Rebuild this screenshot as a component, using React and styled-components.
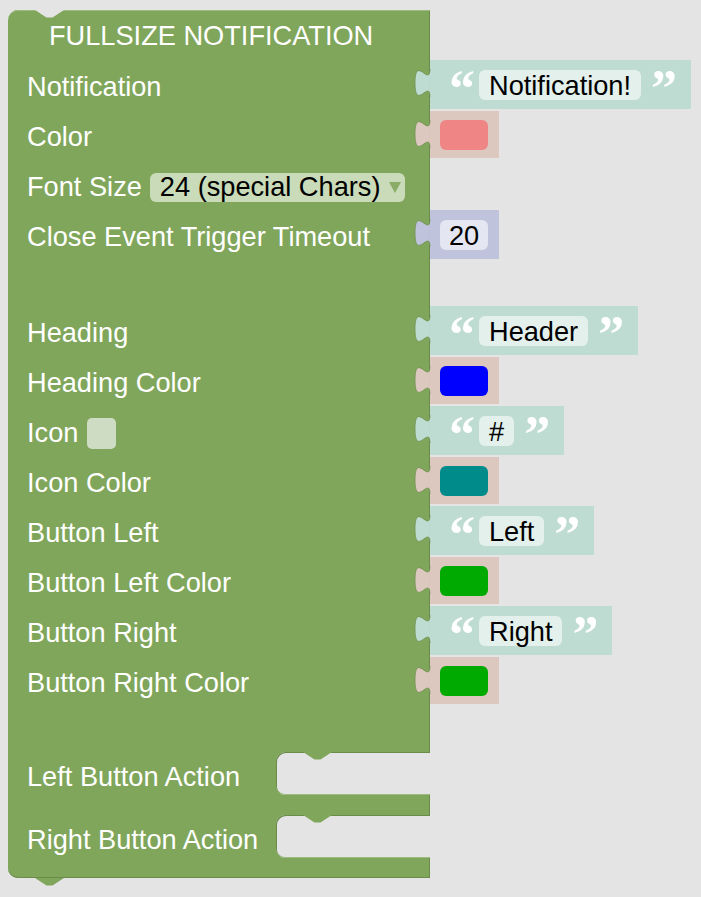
import React from "react";
import styled, { createGlobalStyle } from "styled-components";

const GREEN = "#80a65b";
const DARK = "#6a8b4a";
const LIGHT = "#9dbb80";
const PAGE = "#e4e4e4";
const FONT = "27.2px";

const GlobalStyle = createGlobalStyle`
  html, body {
    margin: 0;
    padding: 0;
    background: ${PAGE};
  }
  body {
    font-family: "Liberation Sans", Arial, sans-serif;
  }
`;

const Canvas = styled.div`
  padding: 10px 0 0 8px;
  min-height: 897px;
  box-sizing: border-box;
`;

const Block = styled.div`
  position: relative;
  display: flex;
  flex-direction: column;
  width: max-content;
`;

const Row = styled.div`
  display: flex;
  align-items: flex-start;
`;

const GreenCell = styled.div`
  flex-shrink: 0;
  box-sizing: border-box;
  width: 422px;
  height: ${(p) => p.$h}px;
  display: flex;
  align-items: center;
  background: ${GREEN};
  border-top-left-radius: ${(p) => (p.$top ? 10 : 0)}px;
  border-bottom-left-radius: ${(p) => (p.$bottom ? 10 : 0)}px;
  box-shadow: ${(p) =>
    p.$top
      ? `inset 0 1px 0 ${LIGHT}, inset -1px 0 0 ${DARK}`
      : p.$bottom
      ? `inset 0 -1px 0 ${DARK}, inset -1px 0 0 ${DARK}`
      : `inset -1px 0 0 ${DARK}`};
`;

const Title = styled.span`
  padding-left: 41px;
  color: #fff;
  font-size: ${FONT};
`;

const Label = styled.span`
  display: flex;
  align-items: center;
  padding-left: 19px;
  color: #fff;
  font-size: ${FONT};
  white-space: nowrap;
`;

const StatementLabel = styled(Label)`
  box-sizing: border-box;
  width: 268px;
  flex-shrink: 0;
  padding-top: ${(p) => p.$shift || 0}px;
`;

const Mouth = styled.div`
  position: relative;
  align-self: stretch;
  flex: 1;
  background: ${PAGE};
  border-radius: 9px 0 0 9px;
  box-shadow: inset 1px 1px 0 ${DARK}, inset 0 -1px 0 ${LIGHT};
`;

const Notch = styled.svg`
  position: absolute;
  left: ${(p) => p.$left}px;
  top: ${(p) => p.$top}px;
  width: 29px;
  height: 8px;
  overflow: visible;
`;

const Plug = styled.div`
  position: relative;
  box-sizing: border-box;
  display: flex;
  align-items: center;
  height: ${(p) => p.$h}px;
  margin-top: ${(p) => p.$mt}px;
  padding: ${(p) => p.$pad};
  background: ${(p) => p.$bg};
`;

const Tab = styled.svg`
  position: absolute;
  left: -15px;
  top: 9px;
  width: 15px;
  height: 28px;
  overflow: visible;
`;

const Quote = styled.span`
  color: #fff;
  font-family: "Liberation Serif", serif;
  font-weight: bold;
  font-size: 52px;
  line-height: 1;
  width: 20px;
  height: 30px;
  overflow: visible;
  transform: translateY(-7px);
`;

const Field = styled.span`
  display: flex;
  align-items: center;
  box-sizing: border-box;
  height: 30px;
  padding: 2px ${(p) => p.$px || 10}px 0;
  margin: 0 ${(p) => (p.$flush ? 0 : 10)}px;
  border-radius: 6px;
  background: ${(p) => p.$bg};
  color: #000;
  font-size: ${FONT};
`;

const Swatch = styled.span`
  width: 48px;
  height: 30px;
  border-radius: 6px;
  background: ${(p) => p.$color};
`;

const Dropdown = styled.span`
  display: inline-flex;
  align-items: center;
  height: 29px;
  margin-left: 8px;
  padding: 0 4px 0 10px;
  border-radius: 6px;
  background: #c9dbb8;
  color: #000;
  font-size: ${FONT};
  white-space: nowrap;
`;

const Arrow = styled.svg`
  width: 12px;
  height: 12px;
  margin-left: 9px;
`;

const Checkbox = styled.span`
  display: inline-block;
  width: 29px;
  height: 31px;
  margin-left: 9px;
  border-radius: 5px;
  background: #cfdcc4;
`;

const INLINE = {
  text: { bg: "#bfdcd2", h: 49, mt: -2, pad: "0 20px 0 19px" },
  color: { bg: "#dcc8bf", h: 47, mt: -1, pad: "0 11px 0 10px" },
  number: { bg: "#bfc3dc", h: 49, mt: -2, pad: "0 11px 0 10px" },
};

const TabShape = ({ color }) => (
  <Tab viewBox="0 0 8 15">
    <path d="M8,0 c0,10 -8,-8 -8,7.5 s8,-2.5 8,7.5 Z" fill={color} />
    <path d="M8,0 c0,10 -8,-8 -8,7.5 s8,-2.5 8,7.5" fill="none" stroke={DARK} strokeWidth="0.35" />
  </Tab>
);

const Inline = ({ kind, children }) => {
  const k = INLINE[kind];
  return (
    <Plug $bg={k.bg} $h={k.h} $mt={k.mt} $pad={k.pad}>
      <TabShape color={k.bg} />
      {children}
    </Plug>
  );
};

const TextInput = ({ value }) => (
  <Inline kind="text">
    <Quote>“</Quote>
    <Field $bg="#e3f0eb">{value}</Field>
    <Quote>”</Quote>
  </Inline>
);

const ColorInput = ({ color }) => (
  <Inline kind="color">
    <Swatch $color={color} />
  </Inline>
);

const NumberInput = ({ value }) => (
  <Inline kind="number">
    <Field $bg="#e4e6f1" $px={9} $flush>{value}</Field>
  </Inline>
);

const Line = ({ label, children }) => (
  <Row>
    <GreenCell $h={50}>
      <Label>{label}</Label>
    </GreenCell>
    {children}
  </Row>
);

const NotchPath = ({ fill }) => (
  <path d="M0,0 L11.5,7.5 L17.5,7.5 L29,0 Z" fill={fill} />
);

const Statement = ({ label, shift }) => (
  <Row>
    <GreenCell $h={43}>
      <StatementLabel $shift={shift}>{label}</StatementLabel>
      <Mouth>
        <Notch $left={27} $top={0} viewBox="0 0 29 8">
          <NotchPath fill={GREEN} />
        </Notch>
      </Mouth>
    </GreenCell>
  </Row>
);

const fields = [
  { label: "Heading", text: "Header" },
  { label: "Heading Color", color: "#0000ff" },
  { label: <>Icon<Checkbox /></>, text: "#" },
  { label: "Icon Color", color: "#008b8b" },
  { label: "Button Left", text: "Left" },
  { label: "Button Left Color", color: "#00aa00" },
  { label: "Button Right", text: "Right" },
  { label: "Button Right Color", color: "#00aa00" },
];

export default function App() {
  return (
    <Canvas>
      <GlobalStyle />
      <Block>
        <Notch $left={27} $top={0} viewBox="0 0 29 8">
          <NotchPath fill={PAGE} />
        </Notch>
        <Row>
          <GreenCell $h={52} $top>
            <Title>FULLSIZE NOTIFICATION</Title>
          </GreenCell>
        </Row>
        <Line label="Notification">
          <TextInput value="Notification!" />
        </Line>
        <Line label="Color">
          <ColorInput color="#f08585" />
        </Line>
        <Line
          label={
            <>
              Font Size
              <Dropdown>
                24 (special Chars)
                <Arrow viewBox="0 0 12 12">
                  <path d="M0,1 L12,1 L6,12 Z" fill="#8aac66" />
                </Arrow>
              </Dropdown>
            </>
          }
        />
        <Line label="Close Event Trigger Timeout">
          <NumberInput value="20" />
        </Line>
        <Row>
          <GreenCell $h={46} />
        </Row>
        {fields.map((f, i) => (
          <Line key={i} label={f.label}>
            {f.text ? <TextInput value={f.text} /> : <ColorInput color={f.color} />}
          </Line>
        ))}
        <Row>
          <GreenCell $h={44} />
        </Row>
        <Statement label="Left Button Action" shift={7} />
        <Row>
          <GreenCell $h={20} />
        </Row>
        <Statement label="Right Button Action" shift={7} />
        <Row>
          <GreenCell $h={20} $bottom />
        </Row>
        <Notch $left={27} $top={868} viewBox="0 0 29 8">
          <NotchPath fill={GREEN} />
        </Notch>
      </Block>
    </Canvas>
  );
}
